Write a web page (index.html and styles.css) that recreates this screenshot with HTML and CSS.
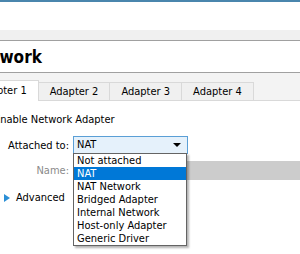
FILE: index.html
```html
<!DOCTYPE html>
<html lang="en">

<head>
    <meta charset="UTF-8">
    <title>Network Settings</title>
    <link rel="stylesheet" href="styles.css">
</head>

<body>
    <div class="window">
        <div class="top-strip"></div>
        <div class="toolbar"></div>

        <div class="page-head">
            <h1>Network</h1>
        </div>

        <div class="tabs">
            <div class="tab active">Adapter 1</div>
            <div class="tab">Adapter 2</div>
            <div class="tab">Adapter 3</div>
            <div class="tab">Adapter 4</div>
        </div>

        <div class="panel">
            <label class="enable">
                <span class="check"></span>
                Enable Network Adapter
            </label>

            <div class="row">
                <span class="label">Attached to:</span>
                <div class="combo open">
                    <span>NAT</span>
                    <span class="arrow"></span>
                    <ul class="list">
                        <li>Not attached</li>
                        <li class="selected">NAT</li>
                        <li>NAT Network</li>
                        <li>Bridged Adapter</li>
                        <li>Internal Network</li>
                        <li>Host-only Adapter</li>
                        <li>Generic Driver</li>
                    </ul>
                </div>
            </div>

            <div class="row name-row">
                <span class="label muted">Name:</span>
                <div class="combo disabled"></div>
            </div>

            <div class="advanced">
                <span class="tri"></span>
                Advanced
            </div>
        </div>
    </div>
</body>

</html>
```

FILE: styles.css
```css
body {
    margin: 0;
    padding: 0;
    font-family: "DejaVu Sans Condensed", "DejaVu Sans", sans-serif;
    font-stretch: condensed;
    font-size: 11px;
    color: #000;
    background-color: #fff;
}

.window {
    width: 300px;
    height: 254px;
    overflow: hidden;
}

.top-strip {
    height: 28px;
    border-top: 2px solid #4a86ad;
    background-color: #fff;
}

.toolbar {
    height: 10px;
    background-color: #f0f0f0;
    border-bottom: 1px solid #a0a0a0;
}

.page-head {
    height: 31px;
    background-color: #fff;
    border-bottom: 1px solid #a0a0a0;
}

.page-head h1 {
    margin: 0 0 0 -31px;
    padding-top: 6px;
    font-size: 17px;
    font-weight: bold;
    line-height: 20px;
}

.tabs {
    display: flex;
    align-items: flex-end;
    height: 27px;
    background-color: #f3f3f3;
    border-bottom: 1px solid #d9d9d9;
}

.tab {
    height: 17px;
    line-height: 17px;
    padding: 0 11px;
    border: 1px solid #d9d9d9;
    border-bottom: none;
    margin-left: -1px;
    background-color: #f0f0f0;
}

.tab.active {
    height: 20px;
    line-height: 20px;
    margin-left: -34px;
    margin-bottom: -1px;
    background-color: #fff;
    position: relative;
}

.panel {
    background-color: #fff;
    height: 153px;
}

.enable {
    display: flex;
    align-items: center;
    gap: 4px;
    margin-left: -23px;
    padding-top: 11px;
    height: 14px;
}

.check {
    width: 11px;
    height: 11px;
    border: 1px solid #333;
}

.row {
    display: flex;
    align-items: center;
    gap: 4px;
}

.row .label {
    width: 69px;
    text-align: right;
}

.label.muted {
    color: #8a8a8a;
}

.row:first-of-type {
    margin-top: 10px;
}

.combo {
    position: relative;
    height: 16px;
    line-height: 16px;
    width: 110px;
    padding-left: 3px;
}

.combo.open {
    background-color: #e5f1fb;
    border: 1px solid #5a9fd6;
    display: flex;
    align-items: center;
}

.arrow {
    margin-left: auto;
    margin-right: 6px;
    width: 0;
    height: 0;
    border-left: 4px solid transparent;
    border-right: 4px solid transparent;
    border-top: 4px solid #000;
}

.name-row {
    margin-top: 7px;
}

.combo.disabled {
    flex: 1;
    height: 19px;
    background-color: #cccccc;
}

.list {
    position: absolute;
    top: 16px;
    left: -1px;
    z-index: 2;
    width: 112px;
    margin: 0;
    padding: 0;
    list-style: none;
    background-color: #fff;
    border: 1px solid #646464;
    box-shadow: 2px 2px 2px rgba(0, 0, 0, 0.3);
}

.list li {
    height: 13px;
    line-height: 13px;
    padding-left: 3px;
}

.list li.selected {
    background-color: #0078d7;
    color: #fff;
}

.advanced {
    display: flex;
    align-items: center;
    gap: 6px;
    margin-top: 11px;
    padding-left: 4px;
}

.tri {
    width: 0;
    height: 0;
    border-top: 4px solid transparent;
    border-bottom: 4px solid transparent;
    border-left: 6px solid #2b8fd6;
}
```
